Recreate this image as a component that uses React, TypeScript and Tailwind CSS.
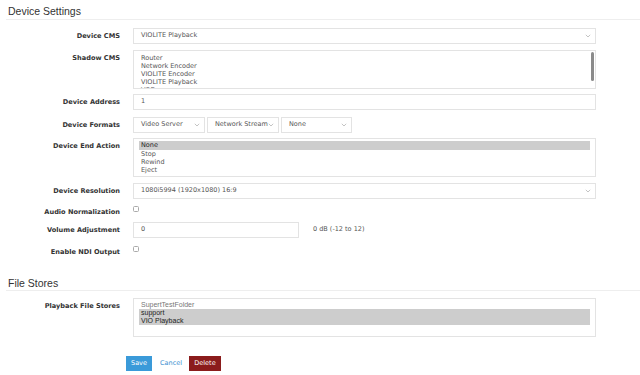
import React from "react";

const font = { fontFamily: '"DejaVu Sans", Verdana, sans-serif' };

function Chevron() {
  return (
    <svg width="6" height="4" viewBox="0 0 6 4" className="shrink-0">
      <path d="M0.8 0.8 L3 3 L5.2 0.8" fill="none" stroke="#aaa" strokeWidth="0.7" />
    </svg>
  );
}

function Label({ children }: { children: React.ReactNode }) {
  return (
    <div className="w-[120px] shrink-0 text-right font-bold text-[6.6px] leading-[16px] text-[#333]">
      {children}
    </div>
  );
}

function SelectBox({ value, width }: { value: string; width: string }) {
  return (
    <div className={`${width} h-[16px] border border-[#e3e3e3] bg-white flex items-center justify-between pl-[7px] pr-[4px] text-[6.5px] text-[#555]`}>
      <span>{value}</span>
      <Chevron />
    </div>
  );
}

export default function App() {
  return (
    <div className="w-[640px] h-[375px] bg-white overflow-hidden" style={font}>
      <div className="ml-[6px] pl-[2px] pt-[4px] h-[15px] border-b border-[#eeeeee] box-content">
        <div className="text-[10.5px] leading-[14px] text-[#333]" style={{ fontFamily: '"Liberation Sans", Arial, sans-serif' }}>
          Device Settings
        </div>
      </div>

      <div className="flex flex-col mt-[8px]">
        <div className="flex">
          <Label>Device CMS</Label>
          <div className="ml-[13px]">
            <SelectBox value="VIOLITE Playback" width="w-[463px]" />
          </div>
        </div>

        <div className="flex mt-[6px]">
          <Label>Shadow CMS</Label>
          <div className="ml-[13px] w-[463px] h-[39px] border border-[#e3e3e3] relative overflow-hidden pl-[7px] pt-[3px] text-[6.5px] leading-[8px] text-[#555]">
            <div>Router</div>
            <div>Network Encoder</div>
            <div>VIOLITE Encoder</div>
            <div>VIOLITE Playback</div>
            <div>VOD</div>
            <div className="absolute right-[1px] top-[1px] w-[3px] h-[29px] rounded-[2px] bg-[#8a8a8a]" />
          </div>
        </div>

        <div className="flex mt-[5px]">
          <Label>Device Address</Label>
          <div className="ml-[13px] w-[463px] h-[16px] border border-[#e3e3e3] flex items-center pl-[7px] text-[6.5px] text-[#555]">1</div>
        </div>

        <div className="flex mt-[7px]">
          <Label>Device Formats</Label>
          <div className="ml-[13px] flex gap-[2px]">
            <SelectBox value="Video Server" width="w-[72px]" />
            <SelectBox value="Network Stream" width="w-[72px]" />
            <SelectBox value="None" width="w-[71px]" />
          </div>
        </div>

        <div className="flex mt-[5px]">
          <Label>Device End Action</Label>
          <div className="ml-[13px] w-[463px] h-[39px] border border-[#e3e3e3] pl-[5px] pr-[5px] pt-[2px] text-[6.5px] leading-[8px] text-[#555]">
            <div className="bg-[#cdcdcd] pl-[2px] text-[#222] leading-[9px]">None</div>
            <div className="pl-[2px]">Stop</div>
            <div className="pl-[2px]">Rewind</div>
            <div className="pl-[2px]">Eject</div>
          </div>
        </div>

        <div className="flex mt-[6px]">
          <Label>Device Resolution</Label>
          <div className="ml-[13px]">
            <SelectBox value="1080i5994 (1920x1080) 16:9" width="w-[463px]" />
          </div>
        </div>

        <div className="flex mt-[5px]">
          <Label>Audio Normalization</Label>
          <div className="ml-[13px] mt-[2px] w-[6px] h-[6px] border border-[#aaa] rounded-[1.5px]" />
        </div>

        <div className="flex mt-[2px] items-center">
          <Label>Volume Adjustment</Label>
          <div className="ml-[13px] w-[166px] h-[16px] border border-[#e3e3e3] flex items-center pl-[7px] text-[6.5px] text-[#555]">0</div>
          <div className="ml-[14px] text-[6.5px] text-[#555]">0 dB (-12 to 12)</div>
        </div>

        <div className="flex mt-[6px]">
          <Label>Enable NDI Output</Label>
          <div className="ml-[13px] mt-[2px] w-[6px] h-[6px] border border-[#aaa] rounded-[1.5px]" />
        </div>
      </div>

      <div className="ml-[6px] pl-[2px] mt-[16px] h-[14px] border-b border-[#eeeeee] box-content">
        <div className="text-[10.5px] leading-[14px] text-[#333]" style={{ fontFamily: '"Liberation Sans", Arial, sans-serif' }}>
          File Stores
        </div>
      </div>

      <div className="flex mt-[7px]">
        <Label>Playback File Stores</Label>
        <div className="ml-[13px] w-[463px] h-[39px] border border-[#e3e3e3] pl-[5px] pr-[5px] pt-[2px] text-[7px] leading-[8px] text-[#777]" style={{ fontFamily: '"Liberation Sans", Arial, sans-serif' }}>
          <div className="pl-[2px]">SupertTestFolder</div>
          <div className="bg-[#cdcdcd] pl-[2px] text-[#222]">support</div>
          <div className="bg-[#cdcdcd] pl-[2px] text-[#222]">VIO Playback</div>
        </div>
      </div>

      <div className="flex items-center ml-[126px] mt-[19px] text-[6.5px]">
        <div className="w-[26px] h-[15px] bg-[#3a9ad9] text-white flex items-center justify-center">Save</div>
        <div className="ml-[8px] w-[22px] text-center text-[#3a8fd0]">Cancel</div>
        <div className="ml-[7px] w-[32px] h-[15px] bg-[#8b1c1c] text-white flex items-center justify-center">Delete</div>
      </div>
    </div>
  );
}
